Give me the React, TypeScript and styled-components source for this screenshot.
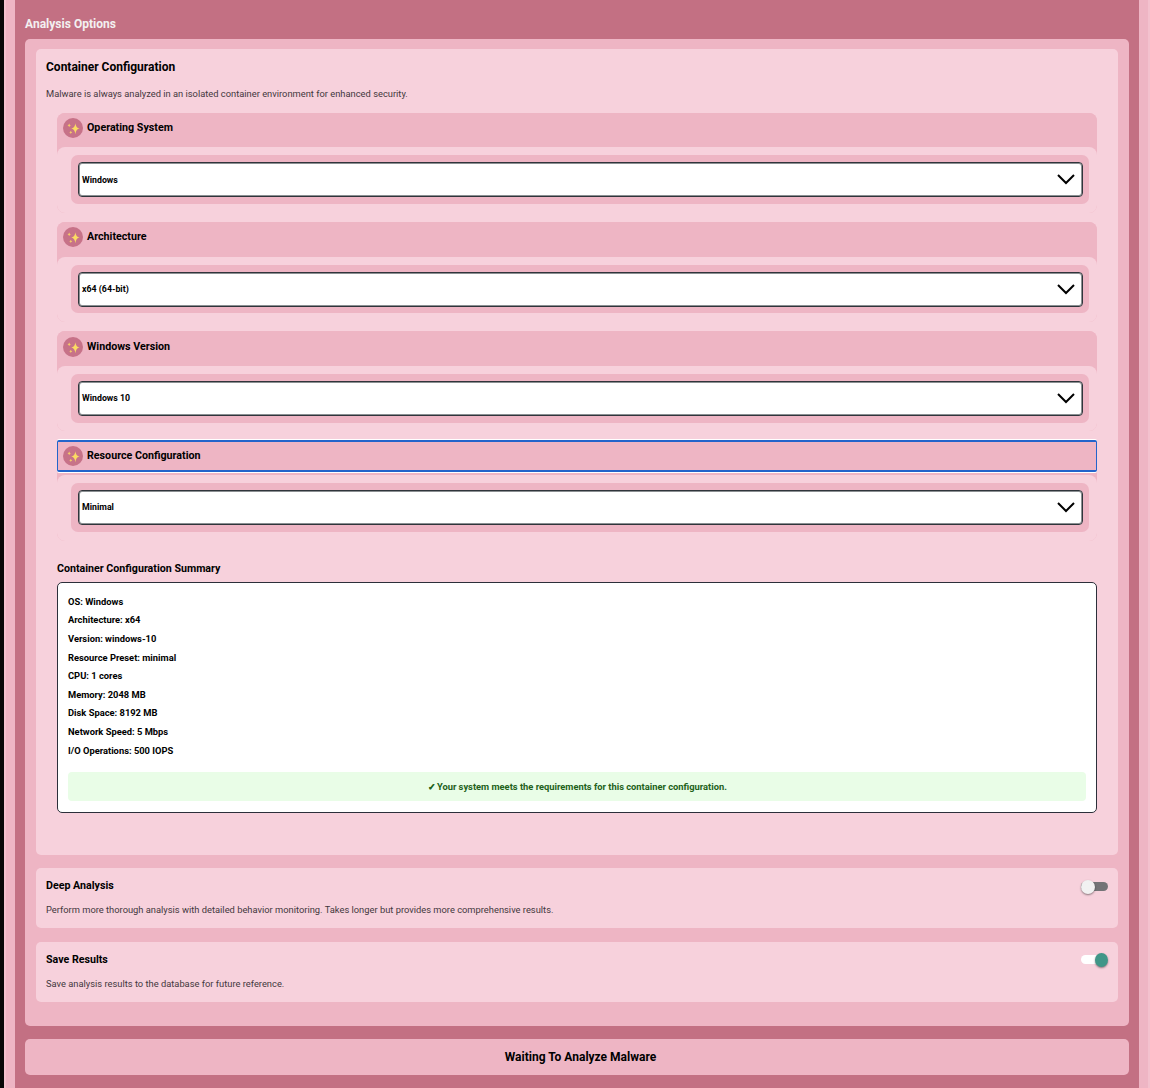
import React, { useState } from "react";
import styled, { createGlobalStyle } from "styled-components";

const dark = "#c37083";
const mid = "#eeb5c4";
const light = "#f7d1dc";

const GlobalStyle = createGlobalStyle`
  *, *::before, *::after { box-sizing: border-box; }
  body { margin: 0; background: #f2bfcc; font-family: Roboto, "Liberation Sans", sans-serif; color: #000; }
  h2, h3, h4, p, ul { margin: 0; padding: 0; }
`;

const Frame = styled.div`
  height: 1088px;
  overflow: hidden;
  border-left: 4px solid #080808;
  padding: 0 2px;
  background: #f3c1ce;
`;

const Shell = styled.div`
  height: 100%;
  padding: 0 9px;
  background: ${mid};
`;

const Page = styled.main`
  height: 100%;
  padding: 17px 10px 0;
  background: ${dark};
`;

const PageTitle = styled.h2`
  height: 22px;
  font-size: 12px;
  line-height: 14px;
  letter-spacing: 0.02px;
  font-weight: 700;
  color: #f3f0f1;
`;

const Panel = styled.section`
  display: flex;
  flex-direction: column;
  height: 987px;
  padding: 10px 11px;
  border-radius: 5px;
  background: ${mid};
`;

const Card = styled.section<{ $height: number; $gap: number }>`
  flex: none;
  height: ${(p) => p.$height}px;
  margin-bottom: ${(p) => p.$gap}px;
  padding: 10px;
  border-radius: 5px;
  background: ${light};
`;

const CardTitle = styled.h3`
  font-size: 12px;
  line-height: 16px;
  font-weight: 700;
`;

const Note = styled.p`
  font-size: 9.33px;
  line-height: 12px;
  color: #43383d;
`;

const Intro = styled(Note)`
  margin-top: 13px;
`;

const Groups = styled.div`
  display: flex;
  flex-direction: column;
  gap: 9.2px;
  margin: 13px 11px 0;
`;

const Group = styled.div`
  display: flex;
  flex-direction: column;
  height: 100px;
  border-radius: 8px;
  background: ${mid};
`;

const GroupHeader = styled.button<{ $focused: boolean }>`
  display: flex;
  flex: none;
  align-items: center;
  width: 100%;
  height: ${(p) => (p.$focused ? 32 : 30.4)}px;
  margin: ${(p) => (p.$focused ? "-0.6px 0 3px" : "0 0 4px")};
  padding: ${(p) => (p.$focused ? "0 5px" : "0 6px")};
  border: solid #2364cb;
  border-width: ${(p) => (p.$focused ? "2px 1px" : "0")};
  border-radius: ${(p) => (p.$focused ? "2px" : "8px 8px 0 0")};
  box-shadow: ${(p) => (p.$focused ? "0 1px 0 #fff, 0 -1px 0 #fff" : "none")};
  outline: none;
  background: ${mid};
  font: 700 10.7px/14px Roboto, "Liberation Sans", sans-serif;
  color: #000;
`;

const Badge = styled.span`
  display: flex;
  width: 20px;
  height: 20px;
  margin-right: 4px;
  border-radius: 50%;
  background: #c77288;
`;

const GroupBody = styled.div`
  flex: none;
  height: 65.6px;
  padding: 8px 8px 0 14px;
  border-radius: 8px;
  background: ${light};
`;

const Control = styled.div`
  height: 48.8px;
  padding: 7px 6px 7px 7px;
  border-radius: 7px;
  background: ${mid};
`;

const SelectBox = styled.button`
  display: flex;
  align-items: center;
  justify-content: space-between;
  width: 100%;
  height: 35px;
  padding: 0 6px 0 3px;
  border: 1px solid #30353b;
  border-radius: 4px;
  box-shadow: inset 0 0 0 1px #8b8f92;
  background: #fff;
  font: 700 8.8px/12px Roboto, "Liberation Sans", sans-serif;
  color: #000;
`;

const Summary = styled.section`
  margin: 21.4px 11px 0;
`;

const SummaryTitle = styled.h4`
  height: 20px;
  font-size: 10.67px;
  line-height: 14px;
  font-weight: 700;
`;

const SummaryBox = styled.div`
  height: 231px;
  padding: 9.8px 10px 0;
  border: 1px solid #2c2f3a;
  border-radius: 5px;
  background: #fff;
`;

const Facts = styled.ul`
  list-style: none;
  font-size: 9.35px;
  font-weight: 700;
  line-height: 18.6px;
`;

const Verdict = styled.p`
  height: 29px;
  margin-top: 11.8px;
  border-radius: 4px;
  background: #e9fde7;
  color: #22611a;
  font-size: 9.33px;
  font-weight: 700;
  line-height: 29px;
  text-align: center;
`;

const Check = styled.span`
  margin: 0 -1.4px 0 0.9px;
  -webkit-text-stroke: 0.3px currentColor;
`;

const OptionHead = styled.div`
  display: flex;
  justify-content: space-between;
  height: 26px;
`;

const OptionTitle = styled.h4`
  font-size: 10.67px;
  line-height: 15px;
  font-weight: 700;
`;

const Toggle = styled.button<{ $on: boolean }>`
  display: flex;
  align-items: center;
  justify-content: ${(p) => (p.$on ? "flex-end" : "flex-start")};
  width: 27px;
  height: 9px;
  margin-top: ${(p) => (p.$on ? 3 : 4)}px;
  padding: 0;
  border: 0;
  border-radius: 5px;
  background: ${(p) => (p.$on ? "#fff" : "#737376")};
`;

const Knob = styled.span<{ $on: boolean }>`
  flex: none;
  width: ${(p) => (p.$on ? 13.5 : 14)}px;
  height: ${(p) => (p.$on ? 14.5 : 14)}px;
  margin-top: ${(p) => (p.$on ? 1 : 0.4)}px;
  border-radius: 50%;
  box-shadow: 0 1px 2px rgba(0, 0, 0, 0.45);
  background: ${(p) => (p.$on ? "#409688" : "#f1f1f1")};
`;

const Submit = styled.button`
  display: block;
  width: 100%;
  height: 36px;
  margin-top: 13px;
  padding: 0 0 0 7px;
  border: 0;
  border-radius: 5px;
  background: ${mid};
  font: 700 12px/16px Roboto, "Liberation Sans", sans-serif;
  color: #000;
`;

const Sparkles = () => (
  <svg width="20" height="20" viewBox="0 0 20 20" fill="#fbdc62">
    <path d="M12.4 5.2Q12.8 10 16.6 10.6Q12.8 11.3 12.4 16.2Q11.9 11.3 8.2 10.6Q11.9 10 12.4 5.2Z" />
    <path d="M6.2 5.6Q6.5 7.1 7.9 7.4Q6.5 7.7 6.2 9.2Q5.8 7.7 4.5 7.4Q5.8 7.1 6.2 5.6Z" opacity=".85" />
    <path d="M7.8 12.8Q8 14.1 9.3 14.4Q8 14.7 7.8 16Q7.5 14.7 6.3 14.4Q7.5 14.1 7.8 12.8Z" opacity=".85" />
  </svg>
);

const Chevron = () => (
  <svg width="20" height="13" viewBox="0 0 20 13" fill="none" stroke="#000" strokeWidth="2">
    <path d="M2 2L10 10L18 2" />
  </svg>
);

const groups = [
  { title: "Operating System", value: "Windows" },
  { title: "Architecture", value: "x64 (64-bit)" },
  { title: "Windows Version", value: "Windows 10" },
  { title: "Resource Configuration", value: "Minimal" },
];

const facts = [
  "OS: Windows",
  "Architecture: x64",
  "Version: windows-10",
  "Resource Preset: minimal",
  "CPU: 1 cores",
  "Memory: 2048 MB",
  "Disk Space: 8192 MB",
  "Network Speed: 5 Mbps",
  "I/O Operations: 500 IOPS",
];

function Option({ title, note, initial, gap }: { title: string; note: string; initial: boolean; gap: number }) {
  const [on, setOn] = useState(initial);
  return (
    <Card $height={60} $gap={gap}>
      <OptionHead>
        <OptionTitle>{title}</OptionTitle>
        <Toggle $on={on} role="switch" aria-checked={on} onClick={() => setOn(!on)}>
          <Knob $on={on} />
        </Toggle>
      </OptionHead>
      <Note>{note}</Note>
    </Card>
  );
}

export default function App() {
  const [focused] = useState(3);
  return (
    <>
      <GlobalStyle />
      <Frame>
        <Shell>
          <Page>
            <PageTitle>Analysis Options</PageTitle>
            <Panel>
              <Card $height={806} $gap={13}>
                <CardTitle>Container Configuration</CardTitle>
                <Intro>Malware is always analyzed in an isolated container environment for enhanced security.</Intro>
                <Groups>
                  {groups.map((g, i) => (
                    <Group key={g.title}>
                      <GroupHeader $focused={i === focused}>
                        <Badge>
                          <Sparkles />
                        </Badge>
                        {g.title}
                      </GroupHeader>
                      <GroupBody>
                        <Control>
                          <SelectBox>
                            {g.value}
                            <Chevron />
                          </SelectBox>
                        </Control>
                      </GroupBody>
                    </Group>
                  ))}
                </Groups>
                <Summary>
                  <SummaryTitle>Container Configuration Summary</SummaryTitle>
                  <SummaryBox>
                    <Facts>
                      {facts.map((f) => (
                        <li key={f}>{f}</li>
                      ))}
                    </Facts>
                    <Verdict>
                      <Check>✓</Check> Your system meets the requirements for this container configuration.
                    </Verdict>
                  </SummaryBox>
                </Summary>
              </Card>
              <Option
                title="Deep Analysis"
                note="Perform more thorough analysis with detailed behavior monitoring. Takes longer but provides more comprehensive results."
                initial={false}
                gap={14}
              />
              <Option title="Save Results" note="Save analysis results to the database for future reference." initial gap={0} />
            </Panel>
            <Submit>Waiting To Analyze Malware</Submit>
          </Page>
        </Shell>
      </Frame>
    </>
  );
}
